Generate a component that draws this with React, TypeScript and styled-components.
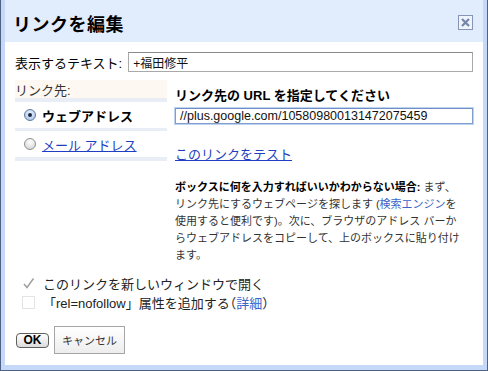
import React from "react";
import styled, {createGlobalStyle} from "styled-components";

const GlobalStyle = createGlobalStyle`
    html, body {
        margin: 0;
        padding: 0;
        background: #ffffff;
    }
    body {
        font-family: "Liberation Sans", "Noto Sans CJK JP", sans-serif;
        color: #000;
    }
`

const Frame = styled.div`
    width: 488px;
    height: 371px;
    box-sizing: border-box;
    border: 1px solid #4f6282;
    border-top: none;
    background: #c5d8f7;
    padding: 0 4px 5px 4px;
    display: flex;
    flex-direction: column;
`

const TitleBar = styled.div`
    height: 42px;
    flex: none;
    background: #e1ecfc;
    display: flex;
    align-items: center;
    justify-content: space-between;
    padding: 0 10px 0 8px;
    box-sizing: border-box;

    h1 {
        margin: 0;
        font-size: 18px;
        font-weight: bold;
        letter-spacing: 0.5px;
        padding-top: 4px;
    }
`

const CloseBox = styled.div`
    width: 15px;
    height: 15px;
    box-sizing: border-box;
    border: 1px solid #8596b4;
    background: #eef3fc;
    display: flex;
    align-items: center;
    justify-content: center;
    margin-top: 3px;
`

const Body = styled.div`
    flex: 1;
    background: #ffffff;
    padding: 10px 10px 0 10px;
    font-size: 13px;
`

const TextRow = styled.div`
    display: flex;
    align-items: center;
    gap: 6px;
`

const Label = styled.span`
    font-size: 13px;
    white-space: nowrap;
`

const TextInput = styled.div<{focused?: boolean}>`
    box-sizing: border-box;
    height: ${p => p.focused ? 21 : 20}px;
    flex: 1;
    border: 1px solid ${p => p.focused ? "#7f9ed0" : "#a9a9a9"};
    border-top-color: ${p => p.focused ? "#6f8fc4" : "#8a8a8a"};
    box-shadow: ${p => p.focused ? "0 0 0 1px #c0d3f0" : "none"};
    padding: 0 4px;
    display: flex;
    align-items: center;
    font-size: ${p => p.focused ? 12.5 : 12}px;
    color: #111;
    white-space: nowrap;
    overflow: hidden;
`

const LinkSection = styled.div`
    display: flex;
    gap: 8px;
    margin-top: 8px;
`

const LeftColumn = styled.div`
    width: 152px;
    flex: none;
    display: flex;
    flex-direction: column;
`

const ColumnHead = styled.div`
    height: 18px;
    background: #fdf8f1;
    display: flex;
    align-items: center;
    color: #333;
`

const Separator = styled.div<{h: number}>`
    height: ${p => p.h}px;
    background: #e9edf5;
`

const RadioItem = styled.div<{selected?: boolean}>`
    height: 26px;
    display: flex;
    align-items: center;
    gap: 6px;
    padding-left: 9px;
    font-weight: ${p => p.selected ? "bold" : "normal"};
    font-size: 13px;
`

const RadioDot = styled.span<{selected?: boolean}>`
    width: 12px;
    height: 12px;
    flex: none;
    border-radius: 50%;
    box-sizing: border-box;
    border: 1px solid ${p => p.selected ? "#5f7aa8" : "#8f8f8f"};
    background: ${p => p.selected
        ? "radial-gradient(circle at 50% 35%, #eef4fd 0%, #9fb9e4 100%)"
        : "radial-gradient(circle at 50% 30%, #ffffff 0%, #cfcfcf 100%)"};
    display: flex;
    align-items: center;
    justify-content: center;

    &::after {
        content: "";
        display: ${p => p.selected ? "block" : "none"};
        width: 4px;
        height: 4px;
        border-radius: 50%;
        background: #1c2a44;
    }
`

const BlueLink = styled.a<{plain?: boolean}>`
    color: ${p => p.plain ? "#3a64c8" : "#1f3fc2"};
    text-decoration: ${p => p.plain ? "none" : "underline"};
    cursor: pointer;
`

const RightColumn = styled.div`
    flex: 1;
    display: flex;
    flex-direction: column;
    padding-top: 7px;

    h2 {
        margin: 0 0 3px 0;
        font-size: 13px;
        line-height: 18px;
        font-weight: bold;
    }
`

const TestLink = styled.div`
    margin-top: 23px;
    line-height: 16px;
    font-size: 13px;
`

const Help = styled.p`
    margin: 16px 0 0 0;
    font-size: 11px;
    line-height: 17px;
    color: #333;
    white-space: nowrap;

    b {
        color: #000;
    }
`

const Options = styled.div`
    margin-top: 10px;
    display: flex;
    flex-direction: column;
`

const OptionRow = styled.div`
    height: 19px;
    display: flex;
    align-items: center;
    gap: 8px;
    padding-left: 7px;
    font-size: 13px;
    color: #222;
`

const Tight = styled.span`
    font-feature-settings: "halt";
`

const CheckBox = styled.span<{checked?: boolean}>`
    width: 13px;
    height: 13px;
    box-sizing: border-box;
    border: ${p => p.checked ? "none" : "1px solid #e4e4e4"};
    display: flex;
    align-items: center;
    justify-content: center;
`

const Buttons = styled.div`
    margin-top: 14px;
    display: flex;
    align-items: center;
    gap: 5px;
    padding-left: 1px;
`

const OkButton = styled.button`
    height: 15px;
    width: 33px;
    box-sizing: border-box;
    border: 1px solid #5e5e5e;
    border-radius: 4px;
    background: linear-gradient(#ffffff, #dcdcdc);
    font-family: "Liberation Sans", sans-serif;
    font-weight: bold;
    font-size: 12px;
    padding: 0;
    line-height: 13px;
`

const CancelButton = styled.button`
    height: 28px;
    width: 71px;
    box-sizing: border-box;
    border: 1px solid #a6a6a6;
    background: linear-gradient(#ffffff, #ededed);
    font-family: "Liberation Sans", "Noto Sans CJK JP", sans-serif;
    font-size: 11px;
    color: #333;
    padding: 0;
`

function App() {
    return (
        <Frame>
            <GlobalStyle/>
            <TitleBar>
                <h1>リンクを編集</h1>
                <CloseBox>
                    <svg width="11" height="11" viewBox="0 0 11 11">
                        <path d="M2 2 L9 9 M9 2 L2 9" stroke="#7386a8" strokeWidth="2.2"/>
                    </svg>
                </CloseBox>
            </TitleBar>
            <Body>
                <TextRow>
                    <Label>表示するテキスト:</Label>
                    <TextInput>+福田修平</TextInput>
                </TextRow>
                <LinkSection>
                    <LeftColumn>
                        <ColumnHead>リンク先:</ColumnHead>
                        <Separator h={4}/>
                        <RadioItem selected>
                            <RadioDot selected/>
                            ウェブアドレス
                        </RadioItem>
                        <Separator h={3}/>
                        <RadioItem>
                            <RadioDot/>
                            <BlueLink>メール アドレス</BlueLink>
                        </RadioItem>
                        <Separator h={4}/>
                    </LeftColumn>
                    <RightColumn>
                        <h2>リンク先の URL を指定してください</h2>
                        <TextInput focused>//plus.google.com/105809800131472075459</TextInput>
                        <TestLink>
                            <BlueLink>このリンクをテスト</BlueLink>
                        </TestLink>
                        <Help>
                            <b>ボックスに何を入力すればいいかわからない場合:</b> まず、<br/>
                            リンク先にするウェブページを探します (<BlueLink plain>検索エンジン</BlueLink>を<br/>
                            使用すると便利です)。次に、ブラウザのアドレス バーか<br/>
                            らウェブアドレスをコピーして、上のボックスに貼り付け<br/>
                            ます。
                        </Help>
                    </RightColumn>
                </LinkSection>
                <Options>
                    <OptionRow>
                        <CheckBox checked>
                            <svg width="13" height="13" viewBox="0 0 13 13">
                                <path d="M2 7 L5 10.5 L11.5 1.5" fill="none" stroke="#a0a0a0" strokeWidth="1.5"/>
                            </svg>
                        </CheckBox>
                        このリンクを新しいウィンドウで開く
                    </OptionRow>
                    <OptionRow>
                        <CheckBox/>
                        <span>「rel=nofollow」属性を追加する<Tight>（</Tight><BlueLink plain>詳細</BlueLink><Tight>）</Tight></span>
                    </OptionRow>
                </Options>
                <Buttons>
                    <OkButton>OK</OkButton>
                    <CancelButton>キャンセル</CancelButton>
                </Buttons>
            </Body>
        </Frame>
    )
}

export default App
